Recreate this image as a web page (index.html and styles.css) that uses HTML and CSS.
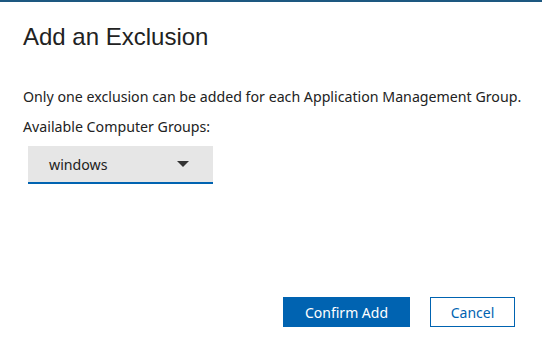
FILE: index.html
```html
<!DOCTYPE html>
<html lang="en">
<head>
  <meta charset="UTF-8" />
  <title>Add an Exclusion</title>
  <link rel="stylesheet" href="styles.css">
</head>
<body>
  <div class="dialog">
    <h2>Add an Exclusion</h2>
    <p class="note">Only one exclusion can be added for each Application Management Group.</p>
    <p class="label">Available Computer Groups:</p>
    <div class="select">
      <span>windows</span>
      <span class="caret"></span>
    </div>
    <div class="actions">
      <button class="primary">Confirm Add</button>
      <button class="secondary">Cancel</button>
    </div>
  </div>
</body>
</html>
```

FILE: styles.css
```css
body {
  margin: 0;
  background: #fff;
  font-family: 'Noto Sans', 'Open Sans', sans-serif;
  color: #222;
}
.dialog {
  height: 344px;
  box-sizing: border-box;
  border-top: 2px solid #1d5880;
  padding: 0 0 0 23px;
  display: flex;
  flex-direction: column;
}
h2 {
  margin: 20px 0 0;
  font-family: 'Liberation Sans', Arial, sans-serif;
  font-weight: normal;
  font-size: 24px;
  line-height: 30px;
  color: #222;
}
.note {
  margin: 35px 0 0;
  font-size: 14.2px;
  line-height: 20px;
}
.label {
  margin: 10px 0 0;
  font-size: 14.2px;
  line-height: 20px;
}
.select {
  margin: 9px 0 0 5px;
  width: 185px;
  height: 38px;
  box-sizing: border-box;
  background: #e6e6e6;
  border-bottom: 2px solid #0063b1;
  display: flex;
  align-items: center;
  justify-content: space-between;
  padding: 0 24px 0 21px;
  font-size: 14.2px;
  color: #222;
}
.caret {
  width: 0;
  height: 0;
  border-left: 6px solid transparent;
  border-right: 6px solid transparent;
  border-top: 6px solid #333;
}
.actions {
  margin-top: auto;
  margin-bottom: 17px;
  display: flex;
  justify-content: flex-end;
  gap: 20px;
  padding-right: 27px;
}
button {
  height: 30px;
  font-family: 'Noto Sans', 'Open Sans', sans-serif;
  font-size: 14px;
  border-radius: 0;
  cursor: pointer;
}
.primary {
  width: 127px;
  background: #0063b1;
  color: #fff;
  border: none;
}
.secondary {
  width: 85px;
  background: #fff;
  color: #0063b1;
  border: 1px solid #0063b1;
}
```
